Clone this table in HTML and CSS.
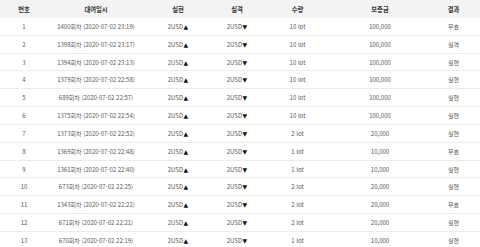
FILE: index.html
```html
<!DOCTYPE html>
<html lang="ko">
<head>
    <meta charset="UTF-8">
    <meta name="viewport" content="width=device-width, initial-scale=1.0">
    <title>대여 내역</title>
    <link rel="stylesheet" href="styles.css">
</head>
<body>
    <div class="history">
        <div class="row head">
            <div>번호</div><div>대여일시</div><div>실현</div><div>실격</div><div>수량</div><div>보증금</div><div>결과</div>
        </div>
        <div id="rows"></div>
    </div>

    <script>
        const rows = [
            ['1400회차 (2020-07-02 23:19)', 10, '무효'],
            ['1398회차 (2020-07-02 23:17)', 10, '실격'],
            ['1394회차 (2020-07-02 23:13)', 10, '실현'],
            ['1379회차 (2020-07-02 22:58)', 10, '실현'],
            ['689회차 (2020-07-02 22:57)', 10, '실현'],
            ['1375회차 (2020-07-02 22:54)', 10, '실현'],
            ['1373회차 (2020-07-02 22:52)', 2, '실현'],
            ['1369회차 (2020-07-02 22:48)', 1, '무효'],
            ['1361회차 (2020-07-02 22:40)', 1, '실현'],
            ['673회차 (2020-07-02 22:25)', 2, '실현'],
            ['1343회차 (2020-07-02 22:22)', 2, '무효'],
            ['671회차 (2020-07-02 22:21)', 2, '실현'],
            ['670회차 (2020-07-02 22:19)', 1, '실현']
        ];

        const list = document.getElementById('rows');
        rows.forEach(function(r, i) {
            const deposit = (r[1] * 10000).toLocaleString('en-US');
            const row = document.createElement('div');
            row.className = 'row';
            row.innerHTML =
                `<div>${i + 1}</div>` +
                `<div>${r[0]}</div>` +
                `<div>2USD<span class="arrow">▲</span></div>` +
                `<div>2USD<span class="arrow">▼</span></div>` +
                `<div>${r[1]} lot</div>` +
                `<div>${deposit}</div>` +
                `<div>${r[2]}</div>`;
            list.appendChild(row);
        });
    </script>
</body>
</html>
```

FILE: styles.css
```css
body {
    margin: 0;
    background-color: #ffffff;
    font-family: "Noto Sans CJK KR", "Noto Sans", sans-serif;
    font-size: 6px;
    color: #555555;
}
.history {
    width: 480px;
}
.row {
    display: grid;
    grid-template-columns: 48px 96px 68px 50px 71px 94px 1fr;
    align-items: center;
    height: 17.83px;
    box-sizing: border-box;
    padding-top: 1px;
    border-bottom: 1px solid #ececec;
    text-align: center;
    line-height: 1;
}
.row.head {
    height: 18px;
    padding-top: 2px;
    background-color: #f3f3f3;
    border-bottom: none;
    color: #333333;
    font-weight: bold;
    font-size: 6.3px;
}
.arrow {
    margin-left: 0.5px;
    font-family: "DejaVu Sans", sans-serif;
    font-size: 6px;
    color: #111111;
}
```
